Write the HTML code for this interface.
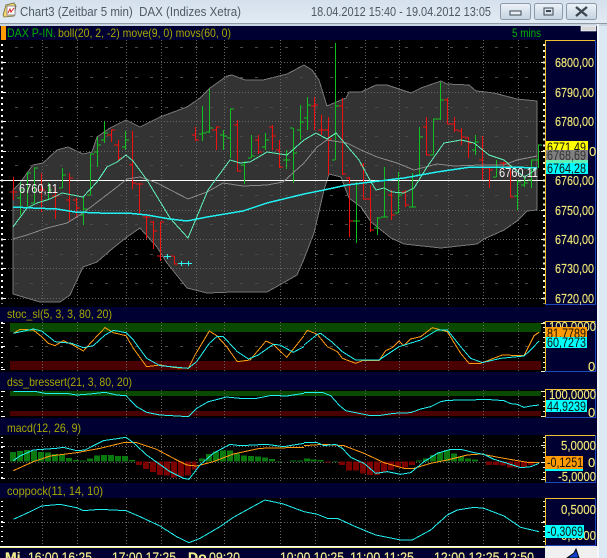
<!DOCTYPE html>
<html><head><meta charset="utf-8"><style>
html,body{margin:0;padding:0;background:#000;width:607px;height:558px;overflow:hidden}
svg{display:block}
text{font-family:"Liberation Sans",sans-serif}
.h{font-size:12px;fill:#a8a800}
.p{font-size:13px;fill:#f2e878;stroke:#f2e878;stroke-width:.15px}
.l{font-size:14px;fill:#111}
.t{font-size:14px;fill:#f5f090;stroke:#f5f090;stroke-width:.15px}
.i{fill:none;stroke-width:3}
polyline{shape-rendering:crispEdges}
</style></head><body>
<svg xmlns="http://www.w3.org/2000/svg" width="607" height="558" viewBox="0 0 607 558">
<defs>
<linearGradient id="tb" x1="0" y1="0" x2="0" y2="1"><stop offset="0" stop-color="#d4e0ec"/><stop offset="1" stop-color="#e2ebf4"/></linearGradient>
<linearGradient id="bt" x1="0" y1="0" x2="0" y2="1"><stop offset="0" stop-color="#eef3f8"/><stop offset=".5" stop-color="#d8e2ec"/><stop offset="1" stop-color="#c4d2e0"/></linearGradient>
<clipPath id="cb"><rect x="546" y="0" width="50" height="558"/></clipPath>
</defs>
<!-- window chrome -->
<rect width="607" height="558" fill="#dce8f3"/>
<rect width="607" height="23" fill="url(#tb)"/>
<rect y="23" width="607" height="1" fill="#8e9aa6"/>
<rect y="24" width="607" height="2" fill="#c8d4e0"/>
<rect x="597" y="24" width="2" height="534" fill="#f4f8fc"/>
<rect x="0" y="26" width="597" height="532" fill="#000032"/>
<!-- title -->
<path d="M3 15L6 5L14 3L16 6L14 16L4 17Z" fill="#f2d670" stroke="#6b6b40" stroke-width=".8"/>
<rect x="7" y="6" width="8" height="9" fill="#fff" stroke="#667" stroke-width=".7"/>
<path d="M8 13L10 9L11 12L14 8" fill="none" stroke="#d02020" stroke-width="1"/>
<text x="20" y="16" font-size="13" fill="#4d5a66" textLength="221" lengthAdjust="spacingAndGlyphs" xml:space="preserve">Chart3 (Zeitbar 5 min)  DAX (Indizes Xetra)</text>
<text x="311" y="16" font-size="13" fill="#4d5a66" textLength="180" lengthAdjust="spacingAndGlyphs">18.04.2012 15:40 - 19.04.2012 13:05</text>
<g stroke="#8c9bab" fill="url(#bt)"><rect x="500.500" y="3.500" width="30" height="16" rx="2"/><rect x="534.500" y="3.500" width="28" height="16" rx="2"/><rect x="566.500" y="3.500" width="30" height="16" rx="2"/></g>
<rect x="510" y="11" width="11" height="4" fill="#e8eef4" stroke="#3c4650"/>
<rect x="544" y="8" width="9" height="7" fill="none" stroke="#3c4650"/><rect x="546" y="10" width="5" height="2" fill="#3c4650"/>
<path d="M576 7L587 16M587 7L576 16" stroke="#3c4650" stroke-width="2.400"/>
<!-- header -->
<rect x="1" y="26" width="5" height="14" fill="#ff9a00"/>
<text x="7" y="37" font-size="12" fill="#00b000" textLength="49" lengthAdjust="spacingAndGlyphs">DAX P-IN.</text>
<text x="58" y="37" class="h" textLength="173" lengthAdjust="spacingAndGlyphs">boll(20, 2, -2) move(9, 0) movs(60, 0)</text>
<text x="512" y="37" font-size="12" fill="#00b000" textLength="29" lengthAdjust="spacingAndGlyphs">5 mins</text>
<rect x="581" y="26" width="15" height="5" fill="#d8d8d8" stroke="#fff" stroke-width=".6"/>
<!-- black chart panes -->
<rect x="0" y="40" width="545" height="267" fill="#000"/>
<rect x="0" y="322" width="545" height="50" fill="#000"/>
<rect x="0" y="390" width="545" height="28" fill="#000"/>
<rect x="0" y="435" width="545" height="48" fill="#000"/>
<rect x="0" y="498" width="545" height="48" fill="#000"/>
<!-- zones -->
<g shape-rendering="crispEdges">
<rect x="10" y="323" width="531" height="9" fill="#0a4a00"/><rect x="10" y="361" width="531" height="9" fill="#4a0000"/>
<rect x="10" y="391" width="531" height="5" fill="#0a4a00"/><rect x="10" y="411" width="531" height="5" fill="#4a0000"/>
</g>
<!-- band -->
<path shape-rendering="crispEdges" d="M13 190L20 183L27 173L33 165L43 163L57 150L68 147L83 154L92 152L97 137L110 128L126 120L140 127L160 117L187 107L200 98L210 88L227 76L232 75L245 80L263 80L287 74L304 65L312 70L319 80L327 106L334 103L346 98L349 92L361 92L376 85L387 85L411 93L421 88L441 81L447 84L469 85L476 91L494 93L517 99L537 101L537 210L527 211L517 221L504 230L484 239L477 244L441 248L404 244L391 238L371 222L361 207L349 198L341 177L329 174L324 190L314 233L304 259L297 275L283 283L267 292L233 292L207 293L187 288L167 263L157 247L140 228L127 237L113 248L97 262L83 267L70 295L60 302L40 302L13 294Z" fill="#333" stroke="#777"/>
<!-- grid -->
<g stroke="#666" stroke-dasharray="1 2" fill="none" shape-rendering="crispEdges">
<path d="M42.500 40V307M77.500 40V307M126.500 40V307M161.500 40V307M196.500 40V307M224.500 40V307M280.500 40V307M315.500 40V307M365.500 40V307M399.500 40V307M448.500 40V307M483.500 40V307M518.500 40V307"/>
<path d="M42.500 322V372M77.500 322V372M126.500 322V372M161.500 322V372M196.500 322V372M224.500 322V372M280.500 322V372M315.500 322V372M365.500 322V372M399.500 322V372M448.500 322V372M483.500 322V372M518.500 322V372"/>
<path d="M42.500 390V418M77.500 390V418M126.500 390V418M161.500 390V418M196.500 390V418M224.500 390V418M280.500 390V418M315.500 390V418M365.500 390V418M399.500 390V418M448.500 390V418M483.500 390V418M518.500 390V418"/>
<path d="M42.500 435V483M77.500 435V483M126.500 435V483M161.500 435V483M196.500 435V483M224.500 435V483M280.500 435V483M315.500 435V483M365.500 435V483M399.500 435V483M448.500 435V483M483.500 435V483M518.500 435V483"/>
<path d="M42.500 498V546M77.500 498V546M126.500 498V546M161.500 498V546M196.500 498V546M224.500 498V546M280.500 498V546M315.500 498V546M365.500 498V546M399.500 498V546M448.500 498V546M483.500 498V546M518.500 498V546"/>
<path d="M8 62.500H540M8 92.500H540M8 121.500H540M8 151.500H540M8 210.500H540M8 239.500H540M8 268.500H540M8 298.500H540M8 446.500H540M8 462.500H540M8 478.500H540M8 522.500H540"/>
</g>
<g stroke="#4a4a4a" stroke-dasharray="3 12" fill="none" shape-rendering="crispEdges">
<path d="M15 47.500H540M15 77.500H540M15 107.500H540M15 136.500H540M15 165.500H540M15 195.500H540M15 224.500H540M15 254.500H540M15 283.500H540M15 346.500H540"/>
</g>
<!-- price line -->
<rect x="0" y="180" width="545" height="1" fill="#fff"/>
<!-- bars green -->
<path shape-rendering="crispEdges" fill="none" stroke="#10c020" d="
M20.500 182V215M17 198H20M20 190H24
M27.500 173V208M24 208H27M27 173H31
M34.500 168V203M31 203H34M34 168H38
M48.500 183V200M45 200H48M48 190H52
M62.500 168V188M59 188H62M62 175H66
M83.500 197V225M80 215H83M83 209H87
M90.500 154V195M87 195H90M90 154H94
M97.500 137V167M94 152H97M97 145H101
M104.500 121V143M101 140H104M104 133H108
M125.500 131V150M122 147H125M125 140H129
M202.500 106V141M199 134H202M202 133H206
M209.500 89V133M206 132H209M209 128H213
M223.500 130V150M220 135H223M223 136H227
M230.500 109V158M227 138H230M230 109H234
M244.500 162V184M241 165H244M244 162H248
M251.500 135V158M248 158H251M251 156H255
M265.500 133V150M262 147H265M265 140H269
M286.500 150V169M283 160H286M286 160H290
M293.500 128V183M290 128H293M293 153H297
M300.500 105V140M297 130H300M300 122H304
M307.500 97V130M304 118H307M307 105H311
M335.500 43V160M332 160H335M335 106H339
M356.500 182V243M353 221H356M356 221H360
M377.500 217V235M374 228H377M377 218H381
M384.500 167V217M381 217H384M384 217H388
M398.500 172V213M395 213H398M398 195H402
M412.500 173V207M409 207H412M412 207H416
M419.500 127V175M416 175H419M419 137H423
M433.500 119V155M430 155H433M433 119H437
M440.500 82V120M437 119H440M440 100H444
M475.500 135V155M472 150H475M475 142H479
M496.500 160V177M493 177H496M496 165H500
M517.500 180V210M514 196H517M517 182H521
M524.500 177V187M521 185H524M524 183H528
M531.500 160V188M528 180H531M531 160H535
M538.500 145V168M535 160H538M538 145H542"/>
<!-- bars red -->
<path shape-rendering="crispEdges" fill="none" stroke="#f01010" d="
M13.500 177V200M10 192H13M13 192H17
M41.500 173V212M38 190H41M41 190H45
M55.500 187V219M52 196H55M55 196H59
M69.500 173V221M66 200H69M69 178H73
M76.500 198V218M73 200H76M76 208H80
M111.500 130V142M107 135H111M111 130H115
M118.500 140V160M114 145H118M118 158H122
M132.500 131V189M129 165H132M132 183H136
M139.500 183V215M136 184H139M139 184H143
M146.500 216V239M143 217H146M146 217H150
M153.500 221V249M150 222H153M153 231H157
M160.500 222V261M157 256H160M160 222H164
M174.500 256V264M171 256H174M174 264H178
M195.500 127V141M192 135H195M195 140H199
M216.500 127V150M212 130H216M216 127H220
M237.500 120V171M234 125H237M237 171H241
M258.500 135V154M255 140H258M258 152H262
M272.500 125V150M269 127H272M272 136H276
M279.500 140V168M276 150H279M279 167H283
M314.500 97V130M311 106H314M314 105H318
M321.500 115V135M318 130H321M321 130H325
M328.500 117V175M325 130H328M328 139H332
M342.500 98V175M339 106H342M342 174H346
M349.500 177V237M346 178H349M349 221H353
M363.500 163V199M360 165H363M363 199H367
M370.500 185V232M367 199H370M370 230H374
M391.500 190V220M388 195H391M391 215H395
M405.500 190V207M402 192H405M405 205H409
M426.500 117V155M423 127H426M426 155H430
M447.500 98V124M444 100H447M447 124H451
M454.500 117V132M451 124H454M454 130H458
M461.500 128V145M458 131H461M461 137H465
M468.500 137V158M465 138H468M468 143H472
M482.500 136V180M479 160H482M482 168H486
M489.500 168V188M486 168H489M489 170H493
M503.500 162V170M500 163H503M503 163H507
M510.500 165V197M507 166H510M510 197H514"/>
<!-- pluses -->
<path shape-rendering="crispEdges" fill="none" stroke="#30f0f0" d="M164 256.500H171M167.500 254V259M178 263.500H185M181.500 261V266M185 263.500H192M188.500 261V266"/>
<!-- main indicators -->
<polyline fill="none" stroke="#8a8a8a" points="13,239 27,235 47,228 67,223 83,213 100,200 117,187 127,179 140,177 157,183 188,199 207,192 223,183 243,186 267,185 283,182 304,163 317,147 327,140 347,143 361,150 377,157 397,163 414,170 437,164 454,166 481,165 504,165 517,160 537,156"/>
<polyline fill="none" stroke="#60f0b8" points="13,227 27,208 37,203 50,199 62,193 83,197 97,182 107,167 117,162 126,155 133,161 147,180 170,218 188,238 208,190 230,160 240,163 250,162 267,152 287,155 304,140 316,133 327,139 336,133 342,140 359,160 371,182 376,190 384,188 392,192 404,193 414,188 427,167 444,143 461,140 474,143 489,155 504,160 512,167 524,177 531,173 537,168"/>
<polyline fill="none" stroke="#20f0f0" stroke-width="1.500" points="13,207 33,208 57,209 75,212 100,213 127,213 147,215 170,219 187,221 207,217 243,211 267,203 304,194 324,190 347,185 371,182 404,178 437,172 471,167 511,167 537,168"/>
<text x="19" y="193" font-size="13" fill="#f4f4f4" textLength="39" lengthAdjust="spacingAndGlyphs">6760,11</text>
<text x="499" y="177" font-size="13" fill="#f4f4f4" textLength="39" lengthAdjust="spacingAndGlyphs">6760,11</text>
<!-- stoc -->
<g transform="translate(0,305) scale(.33333)">
<polyline class="i" stroke="#ff9a10" points="40,85 60,73 100,75 125,95 145,115 165,122 190,107 215,118 250,138 280,105 315,68 340,83 378,92 400,130 440,185 480,180 525,188 565,190 585,150 628,78 650,92 680,125 712,170 750,165 798,108 820,118 860,157 912,92"/>
<polyline class="i" stroke="#20f0f0" points="40,85 100,72 125,78 165,110 215,115 250,128 280,122 315,90 340,76 378,83 400,105 440,160 480,182 565,190 590,170 628,115 650,95 670,95 712,140 745,162 775,150 820,118 840,120 880,142 912,125"/>
<polyline class="i" stroke="#20f0f0" points="40,260 110,260 135,265 200,265 230,270 270,267 315,262 350,270 378,272 410,305 440,322 480,330 565,335 590,310 625,290 680,276 720,280 770,280 815,271 860,273 912,265"/>
</g>
<g transform="translate(304,305) scale(.33333)">
<polyline class="i" stroke="#ff9a10" points="0,90 10,76 40,88 70,125 100,140 115,160 155,175 175,167 225,167 245,137 265,128 285,108 300,122 320,102 350,95 385,68 430,80 470,145 495,175 530,175 595,150 660,152 690,92 705,82"/>
<polyline class="i" stroke="#20f0f0" points="0,120 40,88 50,85 85,112 115,140 155,165 225,165 285,125 350,105 400,75 430,75 470,125 500,160 535,173 590,160 660,153 680,135 705,108"/>
<polyline class="i" stroke="#20f0f0" points="0,262 55,262 80,272 105,300 125,317 180,328 195,331 230,331 270,325 320,323 350,312 380,305 410,290 430,286 500,285 545,283 600,287 620,296 640,298 660,307 680,303 705,300"/>
</g>
<!-- macd hist -->
<g transform="translate(0,430) scale(.33333)" shape-rendering="crispEdges">
<path fill="#0a7a10" d="M30 66h18V95H30ZM51 63h18V95H51ZM72 60h18V95H72ZM93 63h18V95H93ZM114 66h18V95H114ZM135 68h18V95H135ZM156 72h18V95H156ZM177 73h18V95H177ZM198 84h18V95H198ZM219 90h18V95H219ZM240 92h18V95H240ZM261 85h18V95H261ZM282 77h18V95H282ZM303 75h18V95H303ZM324 75h18V95H324ZM345 78h18V95H345ZM366 78h18V95H366ZM387 90h18V95H387ZM597 85h18V95H597ZM618 72h18V95H618ZM639 65h18V95H639ZM660 62h18V95H660ZM681 62h18V95H681ZM702 70h18V95H702ZM723 77h18V95H723ZM744 78h18V95H744ZM765 80h18V95H765ZM786 82h18V95H786ZM807 87h18V95H807ZM828 93h18V95H828ZM870 92h18V95H870ZM891 92h18V95H891Z"/>
<path fill="#7a0000" d="M408 95h18V105H408ZM429 95h18V117H429ZM450 95h18V126H450ZM471 95h18V135H471ZM492 95h18V137H492ZM513 95h18V142H513ZM534 95h18V140H534ZM555 95h18V137H555ZM576 95h14V118H576Z"/>
</g>
<g transform="translate(304,430) scale(.33333)" shape-rendering="crispEdges">
<path fill="#0a7a10" d="M0 85h18V95H0ZM20 88h18V95H20ZM41 90h18V95H41ZM84 93h18V95H84ZM336 92h18V95H336ZM357 85h18V95H357ZM378 75h18V95H378ZM399 66h18V95H399ZM420 60h18V95H420ZM441 70h18V95H441ZM462 80h18V95H462ZM483 85h18V95H483ZM504 88h18V95H504Z"/>
<path fill="#7a0000" d="M63 95h18V98H63ZM105 95h18V105H105ZM126 95h18V122H126ZM147 95h18V122H147ZM168 95h18V130H168ZM189 95h18V135H189ZM210 95h18V135H210ZM231 95h18V128H231ZM252 95h18V120H252ZM273 95h18V113H273ZM294 95h18V113H294ZM315 95h18V105H315ZM546 95h18V105H546ZM567 95h18V105H567ZM588 95h18V107H588ZM609 95h18V113H609ZM630 95h18V113H630ZM651 95h18V112H651ZM672 95h18V105H672Z"/>
</g>
<g transform="translate(0,430) scale(.33333)">
<polyline class="i" stroke="#ff9a10" points="40,122 100,95 150,78 230,68 300,55 370,38 410,38 470,58 530,90 560,105 590,108 640,95 700,72 780,55 912,52"/>
<polyline class="i" stroke="#20f0f0" points="40,92 60,78 100,60 170,55 190,52 230,62 255,60 310,32 378,22 400,38 440,75 510,125 550,145 567,148 600,105 640,70 690,43 720,47 800,43 850,50 912,40"/>
<polyline class="i" stroke="#20f0f0" points="40,268 80,250 125,228 180,223 230,233 250,242 300,238 378,242 420,260 480,288 530,320 567,338 600,325 660,290 700,262 740,240 795,210 850,222 912,245"/>
</g>
<g transform="translate(304,430) scale(.33333)">
<polyline class="i" stroke="#ff9a10" points="0,47 60,43 120,47 180,70 240,98 300,115 330,115 380,100 430,90 490,75 530,72 600,85 670,97 705,97"/>
<polyline class="i" stroke="#20f0f0" points="0,38 40,38 60,47 95,43 115,55 140,82 180,100 215,130 250,125 290,133 320,128 360,95 400,70 440,58 470,58 510,68 540,73 570,88 610,100 650,113 680,110 705,100"/>
<polyline class="i" stroke="#20f0f0" points="0,245 40,253 70,265 100,265 150,288 215,315 290,330 325,330 380,300 430,255 460,240 510,232 540,235 600,258 650,292 705,305"/>
</g>
<!-- panel headers -->
<text x="7" y="318" class="h" textLength="105" lengthAdjust="spacingAndGlyphs">stoc_sl(5, 3, 3, 80, 20)</text>
<text x="7" y="386" class="h" textLength="125" lengthAdjust="spacingAndGlyphs">dss_bressert(21, 3, 80, 20)</text>
<text x="7" y="432" class="h" textLength="74" lengthAdjust="spacingAndGlyphs">macd(12, 26, 9)</text>
<text x="7" y="495" class="h" textLength="96" lengthAdjust="spacingAndGlyphs">coppock(11, 14, 10)</text>
<!-- left ticks -->
<g fill="none" stroke="#fff" shape-rendering="crispEdges">
<path stroke-width="2" stroke-dasharray="2 3.900" d="M2 44V304"/>
<path d="M1 62.500H6M1 92.500H6M1 121.500H6M1 151.500H6M1 180.500H6M1 210.500H6M1 239.500H6M1 268.500H6M1 298.500H6"/>
<path stroke-width="2" stroke-dasharray="1 4" d="M2 322V370M2 391V416M2 437V482M2 501V545"/>
<path d="M1 323.500H5M1 346.500H5M1 369.500H5M1 391.500H5M1 416.500H5M1 446.500H5M1 462.500H5M1 478.500H5M1 522.500H5"/>
</g>
<!-- right ticks -->
<g fill="none" stroke="#f6f0c8" shape-rendering="crispEdges">
<path stroke-width="2" stroke-dasharray="2 3.900" d="M544 44V304"/>
<path d="M541 62.500H545M541 92.500H545M541 121.500H545M541 151.500H545M541 180.500H545M541 210.500H545M541 239.500H545M541 268.500H545M541 298.500H545"/>
<path stroke-width="2" stroke-dasharray="1 4" d="M544 322V370M544 391V416M544 437V482M544 501V545"/>
<path d="M541 323.500H545M541 371.500H545M541 391.500H545M541 416.500H545M541 445.500H545M541 462.500H545M541 479.500H545M541 522.500H545"/>
</g>
<!-- axis boxes -->
<g fill="#000032" shape-rendering="crispEdges">
<g stroke="#1c48b8"><rect x="545.500" y="40.500" width="50" height="264"/><rect x="545.500" y="321.500" width="50" height="50"/><rect x="545.500" y="389.500" width="50" height="28"/><rect x="545.500" y="435.500" width="50" height="47"/><rect x="545.500" y="498.500" width="50" height="47"/></g>
</g>
<g stroke="#f0c030" fill="none" shape-rendering="crispEdges"><path d="M545 40.500H595M545 321.500H595M545 389.500H595M545 435.500H595M545 498.500H595M545.500 40V304M545.500 321V371M545.500 389V417M545.500 435V482M545.500 498V545"/></g>
<g>
<text x="555" y="67" class="p" textLength="39" lengthAdjust="spacingAndGlyphs">6800,00</text>
<text x="555" y="97" class="p" textLength="39" lengthAdjust="spacingAndGlyphs">6790,00</text>
<text x="555" y="126" class="p" textLength="39" lengthAdjust="spacingAndGlyphs">6780,00</text>
<text x="589" y="156" class="p">0</text>
<text x="555" y="185" class="p" textLength="39" lengthAdjust="spacingAndGlyphs">6760,00</text>
<text x="555" y="215" class="p" textLength="39" lengthAdjust="spacingAndGlyphs">6750,00</text>
<text x="555" y="244" class="p" textLength="39" lengthAdjust="spacingAndGlyphs">6740,00</text>
<text x="555" y="273" class="p" textLength="39" lengthAdjust="spacingAndGlyphs">6730,00</text>
<text x="555" y="303" class="p" textLength="39" lengthAdjust="spacingAndGlyphs">6720,00</text>
</g>
<g clip-path="url(#cb)">
<text x="549" y="331" class="p" textLength="47" lengthAdjust="spacingAndGlyphs">100,0000</text>
<text x="588" y="371" class="p">0</text>
<text x="549" y="399" class="p" textLength="47" lengthAdjust="spacingAndGlyphs">100,0000</text>
<text x="588" y="417" class="p">0</text>
<text x="561" y="450" class="p" textLength="35" lengthAdjust="spacingAndGlyphs">5,0000</text>
<text x="588" y="467" class="p">0</text>
<text x="558" y="481" class="p" textLength="38" lengthAdjust="spacingAndGlyphs">-5,0000</text>
<text x="561" y="514" class="p" textLength="35" lengthAdjust="spacingAndGlyphs">0,5000</text>
<text x="561" y="540" class="p" textLength="35" lengthAdjust="spacingAndGlyphs">0,0000</text>
</g>
<!-- value labels -->
<rect x="546" y="141" width="42" height="10" fill="#ffff00" shape-rendering="crispEdges"/>
<text x="547" y="152" class="l" textLength="39" lengthAdjust="spacingAndGlyphs">6771,49</text>
<rect x="546" y="159" width="42" height="5" fill="#60f0b8" shape-rendering="crispEdges"/>
<rect x="546" y="150" width="42" height="10" fill="#808080" shape-rendering="crispEdges"/>
<text x="547" y="160" class="l" style="fill:#333" textLength="39" lengthAdjust="spacingAndGlyphs">6768,69</text>
<rect x="546" y="163" width="42" height="11" fill="#00ffff" shape-rendering="crispEdges"/>
<text x="547" y="173" class="l" textLength="39" lengthAdjust="spacingAndGlyphs">6764,28</text>
<rect x="546" y="327" width="41" height="10" fill="#ff9a00" shape-rendering="crispEdges"/>
<text x="547" y="338" class="l" textLength="39" lengthAdjust="spacingAndGlyphs">81,7789</text>
<rect x="546" y="337" width="41" height="11" fill="#00ffff" shape-rendering="crispEdges"/>
<text x="547" y="347" class="l" textLength="39" lengthAdjust="spacingAndGlyphs">60,7273</text>
<rect x="546" y="400" width="41" height="12" fill="#00ffff" shape-rendering="crispEdges"/>
<text x="547" y="411" class="l" textLength="39" lengthAdjust="spacingAndGlyphs">44,9239</text>
<rect x="545" y="469" width="38" height="2" fill="#00ffff" shape-rendering="crispEdges"/>
<rect x="545" y="456" width="38" height="13" fill="#ff9a00" shape-rendering="crispEdges"/>
<text x="547" y="467" class="l" textLength="36" lengthAdjust="spacingAndGlyphs">-0,1251</text>
<rect x="545" y="525" width="39" height="13" fill="#00ffff" shape-rendering="crispEdges"/>
<text x="547" y="536" class="l" textLength="36" lengthAdjust="spacingAndGlyphs">-0,3069</text>
<!-- time axis -->
<rect x="0" y="546" width="545" height="1" fill="#fff"/>
<rect x="0" y="547" width="545" height="1" fill="#f4f080"/>
<rect x="0" y="548" width="545" height="10" fill="#000032"/>
<rect x="545" y="546" width="52" height="12" fill="#f0f0f0"/>
<text x="5" y="562" class="t" style="font-weight:bold">Mi</text>
<text x="28" y="562" class="t" textLength="64" lengthAdjust="spacingAndGlyphs">16:00 16:25</text>
<text x="112" y="562" class="t" textLength="64" lengthAdjust="spacingAndGlyphs">17:00 17:25</text>
<text x="188" y="562" class="t" style="font-weight:bold">Do</text>
<text x="209" y="562" class="t" textLength="31" lengthAdjust="spacingAndGlyphs">09:20</text>
<text x="280" y="562" class="t" textLength="64" lengthAdjust="spacingAndGlyphs">10:00 10:25</text>
<text x="350" y="562" class="t" textLength="64" lengthAdjust="spacingAndGlyphs">11:00 11:25</text>
<text x="434" y="562" class="t" textLength="100" lengthAdjust="spacingAndGlyphs">12:00 12:25 12:50</text>
<path d="M567 558L574 553L576 549L579 558Z" fill="#1040d0" stroke="#000" stroke-width="1"/>
</svg>
</body></html>
